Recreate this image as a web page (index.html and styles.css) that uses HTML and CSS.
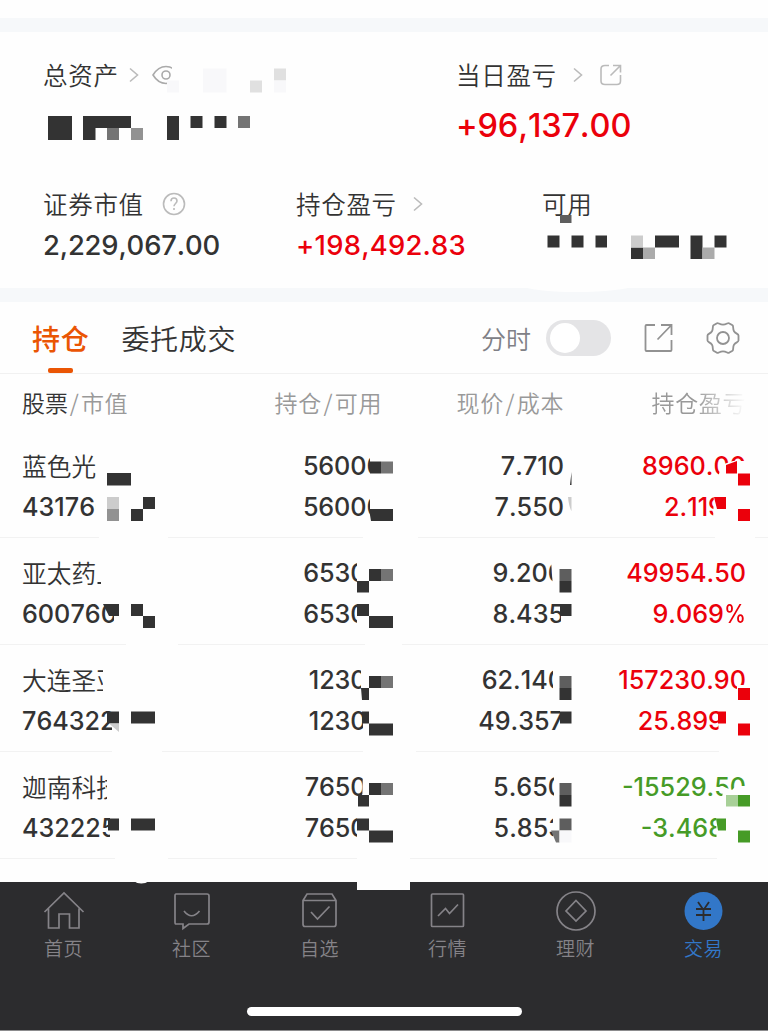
FILE: index.html
```html
<!DOCTYPE html>
<html lang="zh-CN">
<head>
<meta charset="utf-8">
<title>交易</title>
<link rel="stylesheet" href="styles.css">
</head>
<body>
<main class="screen">
  <div class="band band-top"></div>
  <section class="summary">
    <div class="summary-row summary-main">
      <div class="metric">
        <div class="label">总资产
          <svg class="chev chev-near" width="10" height="16" viewBox="0 0 10 16"><path d="M1 1.5 8.5 8 1 14.5"/></svg>
          <svg class="eye" width="28" height="20" viewBox="0 0 28 20"><path d="M1 10C5 3.500 9 1.500 14 1.500S23 3.500 27 10C23 16.500 19 18.500 14 18.500S5 16.500 1 10Z"/><circle cx="14" cy="10" r="4"/></svg>
        </div>
      </div>
      <div class="metric">
        <div class="label">当日盈亏
          <svg class="chev" width="10" height="16" viewBox="0 0 10 16"><path d="M1 1.500 8.500 8 1 14.500"/></svg>
          <svg class="share" width="22" height="22" viewBox="0 0 22 22"><path d="M9 1.500H5Q1 1.500 1 5V17Q1 20.500 5 20.500H17Q20.500 20.500 20.500 17V11M13 1.500H20.500V8.500M20 2 10.500 11.500"/></svg>
        </div>
        <div class="value value-lg up">+96,137.00</div>
      </div>
    </div>
    <div class="summary-row summary-sub">
      <div class="metric">
        <div class="label">证券市值
          <svg class="help" width="24" height="24" viewBox="0 0 24 24"><circle cx="12" cy="12" r="10.500"/><path d="M9 9.200C9 7.300 10.200 6 12 6S15 7.200 15 9C15 11.300 12 11.700 12 14.200M12 16V18"/></svg>
        </div>
        <div class="value value-total">2,229,067.00</div>
      </div>
      <div class="metric">
        <div class="label">持仓盈亏
          <svg class="chev" width="10" height="16" viewBox="0 0 10 16"><path d="M1 1.500 8.500 8 1 14.500"/></svg>
        </div>
        <div class="value value-gain up">+198,492.83</div>
      </div>
      <div class="metric"><div class="label">可用</div></div>
    </div>
  </section>
  <div class="band"></div>

  <nav class="tabs">
    <a class="tab active">持仓</a>
    <a class="tab">委托成交</a>
    <div class="tools">
      <span class="tool-label">分时</span>
      <span class="switch"><span class="knob"></span></span>
      <svg class="tool-share" width="30" height="30" viewBox="0 0 30 30"><path d="M11 2H2.500Q1.500 2 1.500 3V27Q1.500 28 2.500 28H26.500Q27.500 28 27.500 27V17M17 2H27.500V12M27 2.500 13.500 16.500"/></svg>
      <svg class="tool-gear" width="34" height="34" viewBox="0 0 34 34"><path d="M11 2.200C12 1.400 13.500 3.700 17 3.700S22 1.400 23 2.200L26.500 4.300C27.800 5.200 26.500 7.700 28 10.200S32.500 12.800 32.500 14.500V19.500C32.500 21.200 29.500 21.300 28 23.800S27.800 28.800 26.500 29.700L23 31.800C22 32.600 20.500 30.300 17 30.300S12 32.600 11 31.800L7.500 29.700C6.200 28.800 7.500 26.300 6 23.800S1.500 21.200 1.500 19.500V14.500C1.500 12.800 4.500 12.700 6 10.200S6.200 5.200 7.500 4.300Z"/><circle cx="17" cy="17" r="6"/></svg>
    </div>
  </nav>

  <section class="holdings">
    <div class="grid head">
      <span><b>股票</b><i>/</i>市值</span>
      <span>持仓<i>/</i>可用</span>
      <span>现价<i>/</i>成本</span>
      <span class="fade">持仓盈亏</span>
    </div>
    <div class="grid row">
      <span class="name">蓝色光标</span><span>56000</span><span>7.710</span><span class="up">8960.00</span>
      <span>431760</span><span>56000</span><span>7.550</span><span class="up">2.119<em>%</em></span>
    </div>
    <div class="grid row">
      <span class="name">亚太药业</span><span>65300</span><span>9.200</span><span class="up">49954.50</span>
      <span>600760</span><span>65300</span><span>8.435</span><span class="up">9.069<em>%</em></span>
    </div>
    <div class="grid row">
      <span class="name">大连圣亚</span><span>12300</span><span>62.140</span><span class="up">157230.90</span>
      <span>764322</span><span>12300</span><span>49.357</span><span class="up">25.899<em>%</em></span>
    </div>
    <div class="grid row">
      <span class="name">迦南科技</span><span>76500</span><span>5.650</span><span class="down">-15529.50</span>
      <span>432225</span><span>76500</span><span>5.853</span><span class="down">-3.468<em>%</em></span>
    </div>
  </section>

  <footer class="bottom">
    <div class="nav">
      <a class="item"><svg width="42" height="42" viewBox="0 0 42 42"><path d="M1.500 22 21 3 40.500 22M5.500 18.500V38H16V24H26.500V38H36V18.500"/></svg>首页</a>
      <a class="item"><svg width="42" height="42" viewBox="0 0 42 42"><path d="M5 4H36Q38 4 38 6V32Q38 34 36 34H18L12 38.500V34H5Q4 34 4 32V6Q4 4 5 4ZM13 21Q20.500 30.500 28.500 21"/></svg>社区</a>
      <a class="item"><svg width="42" height="42" viewBox="0 0 42 42"><path d="M4 10.500 8 4H33L37 10.500V34Q37 36.500 35 36.500H6Q4 36.500 4 34ZM4 10.500H37M12 22 18.500 29 30.500 16.500"/></svg>自选</a>
      <a class="item"><svg width="42" height="42" viewBox="0 0 42 42"><rect x="4.500" y="4" width="32" height="32.500" rx="1"/><path d="M11 26 18.500 18.500 22.500 23.500 31 14.500"/></svg>行情</a>
      <a class="item"><svg width="42" height="42" viewBox="0 0 42 42"><circle cx="21" cy="21" r="19"/><path d="M21 10.500 31 21 21 31 11 21Z"/></svg>理财</a>
      <a class="item on"><svg width="42" height="42" viewBox="0 0 42 42"><circle class="disc" cx="20.500" cy="21" r="19"/><path class="yen" d="M15 12 20.500 20 26 12M20.500 20V31M13 19H28M13 25H28"/></svg>交易</a>
    </div>
    <div class="home-bar"></div>
  </footer>

  <svg class="redact" width="768" height="1031" viewBox="0 0 768 1031">
    <g class="wipe">
      <path d="M172 64H182V92H167V83H172ZM524 287Q540 292 576 292T632 287ZM357 876H410V890H357ZM132 880Q141 887 151 880Z"/>
      <path d="M96 448H168V542H99V520H96ZM97 560H124V592H97ZM114 596H178V648H126V624H114ZM103 668H160V700H103ZM112 705H162V756H112ZM107 774H168V806H107ZM110 812H168V862H115V844H110Z"/>
      <path d="M370 452H418V542H363V520H370ZM357 558H402V648H365V630H357ZM361 668H416V756H363V704H361ZM363 770H410V862H357V808H362Z"/>
      <path d="M551 560H564V588H553ZM553 667H564V698H553ZM554 774H564V806H554ZM553 812H564V844H553ZM561 600H575V630H561ZM560 705H575V735H560Z"/>
      <path d="M719 474 721 465 733 461H747V494H719ZM714 492H755V541H715V520H713ZM737 685H747V698H737ZM718 703H768V754H719ZM722 797 724 787 732 790 736 786H747V805H722ZM716 810H768V862H717Z"/>
    </g>
    <g class="dark">
      <path d="M48 116H72V140H48ZM83 116H131V128H95.500V140H83ZM167 116H179V140H167ZM190.500 116H202.500V128H190.500ZM214.500 116H226.500V128H214.500Z"/>
      <path d="M547.500 235.500H559.500V247.500H547.500ZM571.500 235.500H583.500V247.500H571.500ZM595.500 235.500H607V247.500H595.500ZM631 247.500H643V259H631ZM655 235.500H679V247.500H655ZM690.500 235.500H702.500V259H690.500ZM714.500 235.500H726.500V247.500H714.500ZM97.500 582H101V584H97.500Z"/>
      <path d="M107 473H131V485.500H107ZM143 497H155V509H143ZM131 509H143V521H131ZM103 604H119V616H109ZM131 604H143V616H131ZM143 616H155V628H143ZM107 711.500H119V723.500H107ZM131 711.500H155V723.500H131ZM108 818.500H119V830.500H108ZM131 818.500H155V830.500H131Z"/>
      <path d="M370 461.500H381V473.500H370ZM369 509H393V521H371ZM369 569H381V581H369ZM357 581H369V592.500H357ZM357 604H369V616H357ZM369 616H393V628H369ZM369 676H381V688H369ZM361 688H369V700H362ZM362 711.500H369V723.500H362ZM369 723.500H393V735.500H369ZM369 783H381V795H369ZM358 795H369V806.500H358ZM357 818.500H369V830.500H357ZM369 830.500H393V842.500H369Z"/>
      <path d="M559.500 581H571.500V592.500H559.500ZM560 604H571.500V616H560ZM559.500 688H571.500V700H559.500ZM560 711.500H571.500V723.500H560ZM559.500 795H571.500V806.500H559.500ZM571.500 472V485H570Z"/>
    </g>
    <path fill="#747474" d="M107 128H119V140H107ZM238 116H250V128H238ZM381 461.500H393V473.500H381ZM381 569H393V581H381ZM381 676H393V688H381ZM381 783H393V795H381ZM551 830.500H559.500V842.500H556Z"/>
    <path fill="#929292" d="M131 128H143V140H131ZM107 509H119V521H107Z"/>
    <path fill="#5e5e5e" d="M560 215H571.500V223H560ZM559.500 569H571.500V581H559.500ZM559.500 676H571.500V688H559.500ZM559.500 783H571.500V795H559.500ZM559.500 818.500H571.500V830.500H559.500Z"/>
    <path fill="#cccccc" d="M631 235.500H643V247.500H631ZM107 497H119V509H107ZM109 723.500H119V732ZM568 497H571.500V511Q569 507 568 497Z"/>
    <path fill="#ababab" d="M643 247.500H655V259H643ZM702.500 247.500H714.500V259H702.500Z"/>
    <path fill="#e0e0e0" d="M250 80.500H262V92.500H250ZM274 68.500H286V80.500H274Z"/>
    <path fill="#f8f8fa" d="M167 80.500H179V92.500H167ZM203 68.500H226.500V92.500H203ZM274 80.500H286V92.500H274ZM559.500 830.500H571.500V842.500H559.500Z"/>
    <path fill="#eb000b" d="M726 465 737 461V473.500H726ZM738 473.500H750V485.500H738ZM714 497H726V509H717ZM738 509H750V521H738ZM738 688H750V700H738ZM718 711.500H726V723.500H718ZM738 723.500H750V735.500H738Z"/>
    <path fill="#469b27" d="M738 795H750V806.500H738ZM716 818.500H726V830.500H718ZM738 830.500H750V842.500H738Z"/>
    <path fill="#a8d098" d="M726 795H738V806.500H726Z"/>
  </svg>
</main>
</body>
</html>
```
FILE: styles.css
```css
* { box-sizing: border-box; }
body { margin: 0; background: #fff; }
svg { display: block; fill: none; flex: none; }
.screen {
  position: relative; width: 768px; height: 1031px; overflow: hidden;
  display: flex; flex-direction: column; background: #fefefe;
  color: #333; font-family: Inter, "Noto Sans CJK SC", sans-serif; font-kerning: none;
}
.band { height: 14px; background: #f6f8fa; flex: none; }
.band-top { margin-top: 18px; }
.summary { height: 256px; padding: 27px 0 0 43px; flex: none; }
.summary-row { display: grid; }
.summary-main { grid-template-columns: 413px 1fr; height: 129px; }
.summary-sub { grid-template-columns: 253px 246px 1fr; }
.label {
  display: flex; align-items: center; height: 32px; line-height: 32px; white-space: nowrap;
  font-family: "Noto Sans CJK SC", sans-serif; font-size: 24.500px; font-weight: 350; letter-spacing: .7px;
}
.label svg { stroke: #bbb; stroke-width: 1.6; }
.label .chev { margin-left: 16px; }
.label .chev-near { margin-left: 10px; }
.label .eye { margin-left: 13px; stroke: #aaa; }
.label .share { margin-left: 17px; }
.label .help { margin-left: 18px; }
.value { font-size: 27.400px; font-weight: 500; line-height: 36px; margin-top: 7px; }
.value-lg { font-size: 32.500px; font-weight: 550; line-height: 40px; margin-top: 15px; letter-spacing: -.15px; }
.value-total { letter-spacing: -.15px; }
.value-gain { letter-spacing: .25px; }
.up { color: #eb000b; }
.down { color: #469b27; }
.tabs { height: 72px; flex: none; display: flex; padding-left: 32px; border-bottom: 1px solid #f1f1f1; font-family: "Noto Sans CJK SC", sans-serif; }
.tab { font-size: 28px; letter-spacing: .7px; font-weight: 350; line-height: 72px; margin-right: 32px; }
.tab.active {
  color: #ea5504; font-weight: 500; display: flex; flex-direction: column; align-items: center;
}
.tab.active::after { content: ""; width: 25px; height: 5px; margin-top: -6px; border-radius: 2px; background: #ea5504; }
.tools { display: flex; align-items: center; margin-left: auto; padding-right: 28px; }
.tool-label { font-size: 25px; font-weight: 350; color: #808086; }
.switch { width: 65px; height: 36px; padding: 3px 4px; border-radius: 18px; background: #e4e4e6; margin: 0 33px 0 15px; }
.knob { display: block; width: 30px; height: 30px; border-radius: 50%; background: #fff; }
.tool-share { margin-right: 32px; }
.tools svg { stroke: #929292; stroke-width: 1.8; }
.holdings { height: 508px; flex: none; }
.grid { display: grid; grid-template-columns: 180px 180px 182px 182px; padding: 0 22px; text-align: right; }
.grid > :nth-child(4n + 1) { text-align: left; }
.head { height: 57px; line-height: 56px; font-family: "Noto Sans CJK SC", sans-serif; font-size: 23px; font-weight: 350; letter-spacing: .6px; color: #999; }
.head b { font-weight: 350; color: #333; letter-spacing: 0; }
.head i { display: inline-block; width: 13px; text-align: center; font-style: normal; }
.fade { -webkit-mask-image: linear-gradient(90deg, #000 72%, transparent 100%); mask-image: linear-gradient(90deg, #000 72%, transparent 100%); }
.row { height: 107px; grid-template-rows: 40.500px 40.500px; padding-top: 15px; line-height: 40.500px; font-size: 25.200px; font-weight: 500; border-bottom: 1px solid #f2f2f2; }
.row > :nth-child(4n + 2) { padding-right: 0; letter-spacing: -.1px; margin-right: -.6px; }
.row .name { font-family: "Noto Sans CJK SC", sans-serif; font-size: 24.700px; font-weight: 350; line-height: 38px; }
.row em { display: inline-block; font-style: normal; font-weight: 500; transform: scaleX(.88); transform-origin: right; margin-left: -3px; }
.bottom { height: 149px; flex: none; background: #2c2c2e; border-bottom: 1px solid #8c8c8e; display: flex; flex-direction: column; align-items: center; }
.nav { display: grid; grid-template-columns: repeat(6, 128px); padding-top: 8px; height: 125px; }
.item { display: flex; flex-direction: column; align-items: center; font-family: "Noto Sans CJK SC", sans-serif; font-size: 19px; font-weight: 350; letter-spacing: .6px; line-height: 32px; color: #858388; padding-right: 1px; }
.item svg { stroke: #858388; stroke-width: 1.7; }
.item.on { color: #3277c8; }
.item .disc { fill: #3277c8; stroke: none; }
.item .yen { stroke: #2c2c2e; stroke-width: 1.8; }
.home-bar { width: 275px; height: 9px; border-radius: 5px; background: #fff; }
.redact { position: absolute; left: 0; top: 0; }
.wipe { fill: #fefefe; }
.dark { fill: #333; }
```
